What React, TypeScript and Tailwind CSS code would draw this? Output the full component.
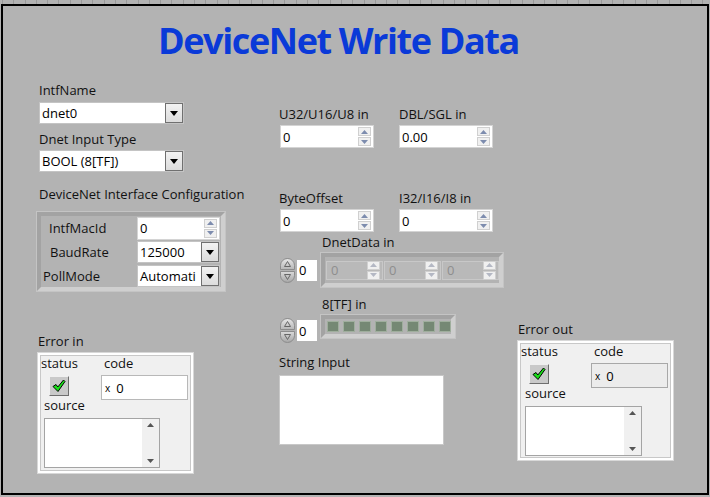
import React from "react";

const label = "block h-[16px] leading-[16px] text-[13px] text-[#111] whitespace-nowrap";

function DownTri() {
  return (
    <svg width="8" height="5" viewBox="0 0 8 5">
      <path d="M0 0h8L4 5z" fill="#000" />
    </svg>
  );
}

function Ring({ value, w }: { value: string; w: string }) {
  return (
    <div className={`${w} h-[22px] bg-white border border-[#c4c4c4] flex items-center`}>
      <span className="flex-1 pl-[2px] text-[13px] leading-[16px] text-black whitespace-nowrap overflow-hidden">
        {value}
      </span>
      <div className="w-[18px] h-[20px] border border-[#707070] bg-gradient-to-b from-[#f2f2f2] to-[#dcdcdc] flex items-center justify-center">
        <DownTri />
      </div>
    </div>
  );
}

function SpinArrows({ dim }: { dim?: boolean }) {
  const c = dim ? "#b4b8c4" : "#7d8cae";
  return (
    <div className="w-[13px] h-[19px] flex flex-col gap-[1px]">
      <div className="flex-1 bg-[#f0f0f0] border border-[#d0d0d0] flex items-center justify-center">
        <svg width="7" height="4" viewBox="0 0 7 4">
          <path d="M0 4h7L3.5 0z" fill={c} />
        </svg>
      </div>
      <div className="flex-1 bg-[#f0f0f0] border border-[#d0d0d0] flex items-center justify-center">
        <svg width="7" height="4" viewBox="0 0 7 4">
          <path d="M0 0h7L3.5 4z" fill={c} />
        </svg>
      </div>
    </div>
  );
}

function Numeric({ value, w, h = "h-[23px]" }: { value: string; w: string; h?: string }) {
  return (
    <div className={`${w} ${h} bg-white border border-[#d4d4d4] flex items-center pr-[2px]`}>
      <span className="flex-1 pl-[2px] text-[13px] leading-[16px] text-black">{value}</span>
      <SpinArrows />
    </div>
  );
}

function DimNumeric() {
  return (
    <div className="w-[57px] h-[19px] bg-[#b9b9b9] border border-[#c8c8c8] flex items-center pr-[2px]">
      <span className="flex-1 pl-[4px] text-[13px] leading-[16px] text-[#8e8e8e]">0</span>
      <SpinArrows dim />
    </div>
  );
}

function IndexCtl() {
  return (
    <div className="flex items-center gap-[2px]">
      <div className="w-[15px] flex flex-col gap-[1px]">
        <div className="h-[12px] rounded-t-full bg-gradient-to-b from-[#e6e6e6] to-[#b8b8b8] border border-[#8c8c8c] flex items-center justify-center">
          <svg width="7" height="6" viewBox="0 0 7 6">
            <path d="M0.5 5.5h6L3.5 0.5z" fill="none" stroke="#666" strokeWidth="1" />
          </svg>
        </div>
        <div className="h-[12px] rounded-b-full bg-gradient-to-b from-[#d8d8d8] to-[#a8a8a8] border border-[#8c8c8c] flex items-center justify-center">
          <svg width="7" height="6" viewBox="0 0 7 6">
            <path d="M0.5 0.5h6L3.5 5.5z" fill="none" stroke="#666" strokeWidth="1" />
          </svg>
        </div>
      </div>
      <div className="w-[20px] h-[21px] bg-white flex items-center pl-[2px] text-[13px] leading-[16px] text-black">0</div>
    </div>
  );
}

const raised =
  "border-[4px] border-t-[#a3a3a3] border-l-[#a3a3a3] border-b-[#cfcfcf] border-r-[#cfcfcf] shadow-[0_0_0_1px_#c4c4c4]";

function Check() {
  return (
    <div className="w-[20px] h-[20px] bg-[#c9c9c9] border border-t-[#f0f0f0] border-l-[#f0f0f0] border-b-[#6e6e6e] border-r-[#6e6e6e] flex items-center justify-center">
      <svg width="14" height="14" viewBox="0 0 14 14">
        <path
          d="M1 7.5 L4 5.5 L5.8 8 L11.5 1 L13 2.5 L6 12.5 Z"
          fill="#18e018"
          stroke="#000"
          strokeWidth="1"
          strokeLinejoin="round"
        />
      </svg>
    </div>
  );
}

function SourceBox({ w }: { w: string }) {
  return (
    <div className={`${w} h-[50px] bg-white border border-[#a4a4a4] flex justify-end`}>
      <div className="w-[17px] h-full bg-[#f0f0f0] flex flex-col items-center justify-between py-[4px]">
        <svg width="7" height="4" viewBox="0 0 7 4">
          <path d="M0 4h7L3.5 0z" fill="#555" />
        </svg>
        <svg width="7" height="4" viewBox="0 0 7 4">
          <path d="M0 0h7L3.5 4z" fill="#555" />
        </svg>
      </div>
    </div>
  );
}

function ErrorCluster({
  title,
  codeX,
  codeW,
  indicator,
  srcX,
  srcW,
  h,
}: {
  title: string;
  codeX: string;
  codeW: string;
  indicator?: boolean;
  srcX: string;
  srcW: string;
  h: string;
}) {
  return (
    <div>
      <span className={label}>{title}</span>
      <div
        className={`mt-[4px] w-[155px] ${h} bg-[#f0f0f0] border-2 border-white shadow-[inset_0_0_0_1px_#c8c8c8,0_0_0_1px_#d8d8d8]`}
      >
        <div className="flex">
          <span className={`${label} ${codeX}`}>status</span>
          <span className={label}>code</span>
        </div>
        <div className="flex items-start mt-[4px]">
          <div className="ml-[9px] mt-[1px]">
            <Check />
          </div>
          <div
            className={`${codeW} h-[25px] ml-auto mr-[3px] flex items-center border ${
              indicator ? "bg-[#ececec] border-[#a8a8a8]" : "bg-white border-[#b8b8b8]"
            }`}
          >
            <span className="pl-[3px] text-[10px] leading-[12px] text-black">x</span>
            <span className="pl-[6px] text-[13px] leading-[16px] text-black">0</span>
          </div>
        </div>
        <span className={`${label} ${srcX} mt-[-3px]`}>source</span>
        <div className={`${srcX} mt-[5px]`}>
          <SourceBox w={srcW} />
        </div>
      </div>
    </div>
  );
}

export default function App() {
  return (
    <div className="w-[710px] h-[497px] bg-[#b3b3b3] overflow-hidden font-['Open_Sans',sans-serif]">
      <div className="h-[4px] flex pl-[2px]">
        {Array.from({ length: 63 }).map((_, i) => (
          <div key={i} className="w-[11.3px] shrink-0 h-full border-l border-[#9a9a9a]" />
        ))}
      </div>
      <div className="ml-[1px] w-[708px] h-[491px] border-2 border-black flex flex-col">
        <div className="h-[74px] pl-[155px] pt-[15px]">
          <h1 className="text-[36px] leading-[40px] font-bold text-[#0a3ad8] tracking-[-1.4px] whitespace-nowrap">
            DeviceNet Write Data
          </h1>
        </div>
        <div className="flex pl-[36px]">
          {/* left column */}
          <div className="w-[240px] flex flex-col">
            <span className={`${label} mt-[2px]`}>IntfName</span>
            <div className="mt-[4px]">
              <Ring value="dnet0" w="w-[145px]" />
            </div>
            <span className={`${label} mt-[7px]`}>Dnet Input Type</span>
            <div className="mt-[3px]">
              <Ring value="BOOL (8[TF])" w="w-[145px]" />
            </div>
            <span className={`${label} mt-[14px]`}>DeviceNet Interface Configuration</span>
            <div className={`mt-[10px] -ml-[2px] w-[188px] h-[79px] ${raised} flex flex-col gap-[2px] pt-[1px]`}>
              {[
                ["IntfMacId", "pl-[8px]", "num", "0"],
                ["BaudRate", "pl-[9px]", "ring", "125000"],
                ["PollMode", "pl-[2px]", "ring", "Automati"],
              ].map(([n, pl, kind, v]) => (
                <div key={n} className="h-[22px] flex items-center">
                  <span className={`${label} ${pl} w-[96px]`}>{n}</span>
                  {kind === "num" ? (
                    <Numeric value={v} w="w-[83px]" h="h-[23px]" />
                  ) : (
                    <Ring value={v} w="w-[83px]" />
                  )}
                </div>
              ))}
            </div>
            <div className="mt-[42px] -ml-[1px]">
              <ErrorCluster
                title="Error in"
                codeX="w-[64px] pl-[1px]"
                codeW="w-[87px]"
                srcX="pl-[4px]"
                srcW="w-[116px]"
                h="h-[120px]"
              />
            </div>
          </div>
          {/* middle column */}
          <div className="w-[239px] flex flex-col">
            <div className="flex gap-[24px] mt-[26px]">
              <div>
                <span className={label}>U32/U16/U8 in</span>
                <div className="mt-[3px] ml-[1px]">
                  <Numeric value="0" w="w-[94px]" />
                </div>
              </div>
              <div className="ml-[1px]">
                <span className={label}>DBL/SGL in</span>
                <div className="mt-[3px]">
                  <Numeric value="0.00" w="w-[94px]" />
                </div>
              </div>
            </div>
            <div className="flex gap-[24px] mt-[42px]">
              <div>
                <span className={label}>ByteOffset</span>
                <div className="mt-[3px] ml-[1px]">
                  <Numeric value="0" w="w-[94px]" />
                </div>
              </div>
              <div className="ml-[1px]">
                <span className={label}>I32/I16/I8 in</span>
                <div className="mt-[3px]">
                  <Numeric value="0" w="w-[94px]" />
                </div>
              </div>
            </div>
            <span className={`${label} mt-[2px] ml-[43px]`}>DnetData in</span>
            <div className="flex items-center gap-[4px] mt-[3px] ml-[1px]">
              <IndexCtl />
              <div className={`w-[182px] h-[34px] ${raised} flex items-center gap-[1px] pl-[1px]`}>
                <DimNumeric />
                <DimNumeric />
                <DimNumeric />
              </div>
            </div>
            <span className={`${label} mt-[9px] ml-[43px]`}>8[TF] in</span>
            <div className="flex items-start gap-[4px] mt-[3px] ml-[1px]">
              <div className="mt-[3px]">
                <IndexCtl />
              </div>
              <div className={`w-[134px] h-[23px] ${raised} flex items-center gap-[4px] pl-[2px]`}>
                {Array.from({ length: 8 }).map((_, i) => (
                  <div key={i} className="w-[12px] h-[11px] bg-[#758874] border border-[#9fae9d]" />
                ))}
              </div>
            </div>
            <span className={`${label} mt-[11px]`}>String Input</span>
            <div className="mt-[5px] w-[165px] h-[70px] bg-white border border-[#c8c8c8]" />
          </div>
          {/* right column */}
          <div className="flex flex-col">
            <div className="mt-[241px]">
              <ErrorCluster
                title="Error out"
                codeX="w-[74px] pl-[1px]"
                codeW="w-[77px]"
                indicator
                srcX="pl-[5px]"
                srcW="w-[117px]"
                h="h-[119px]"
              />
            </div>
          </div>
        </div>
      </div>
    </div>
  );
}
